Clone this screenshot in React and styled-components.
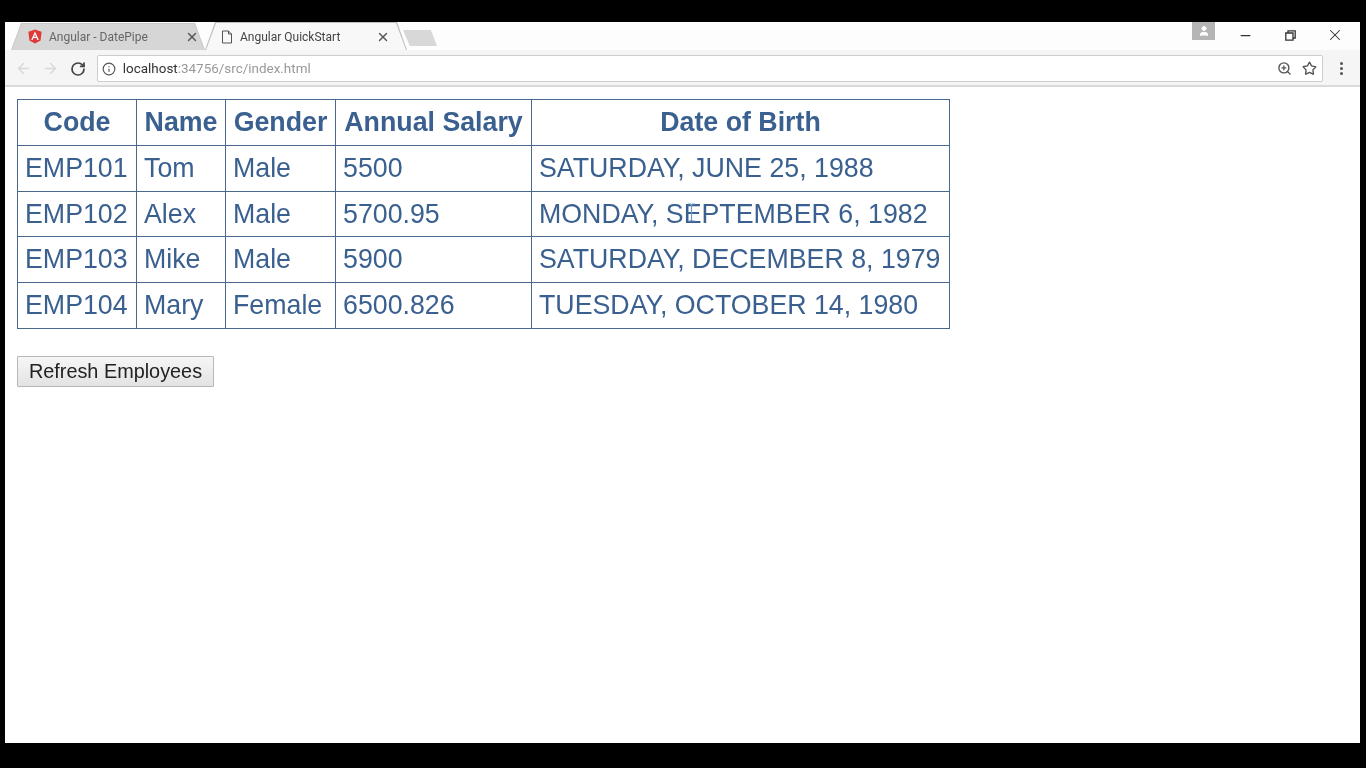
import React from "react";
import styled, { createGlobalStyle } from "styled-components";
import { ArrowLeft, ArrowRight, RotateCw, Info, ZoomIn, Star, X, Minus, User } from "lucide-react";

const Global = createGlobalStyle`
  html, body { margin: 0; padding: 0; background: #000; }
  body { font-family: "Liberation Sans", Arial, sans-serif; }
`;

const Screen = styled.div`
  width: 1366px;
  height: 768px;
  box-sizing: border-box;
  padding: 22px 6px 25px 5px;
  background: #000;
  overflow: hidden;
`;

const Win = styled.div`
  height: 100%;
  display: flex;
  flex-direction: column;
  background: #fff;
  filter: blur(0.45px);
`;

const TabStrip = styled.div`
  height: 28px;
  flex: none;
  display: flex;
  align-items: flex-end;
  background: #fdfdfd;
  padding-left: 6px;
`;

const Tab = styled.div`
  position: relative;
  width: ${p => p.$w}px;
  height: ${p => (p.$active ? 28 : 27)}px;
  padding-top: ${p => (p.$active ? 1 : 0)}px;
  display: flex;
  align-items: center;
  padding-left: ${p => p.$pl}px;
  box-sizing: border-box;
  font-family: Roboto, "Liberation Sans", sans-serif;
  font-size: 12px;
  color: ${p => (p.$active ? "#444" : "#666")};
  z-index: ${p => (p.$active ? 2 : 1)};
  &::before {
    content: "";
    position: absolute;
    inset: 0;
    z-index: -2;
    background: ${p => (p.$active ? "#bdbdbd" : "#c9c9c9")};
    clip-path: polygon(0 100%, 10px 0, calc(100% - 10px) 0, 100% 100%);
  }
  &::after {
    content: "";
    position: absolute;
    inset: 1px 1px 0 1px;
    z-index: -1;
    background: ${p => (p.$active ? "#f8f8f8" : "#d6d6d6")};
    clip-path: polygon(0 100%, 10px 0, calc(100% - 10px) 0, 100% 100%);
  }
`;

const TabTitle = styled.span`
  margin-left: 7px;
  flex: 1;
  white-space: nowrap;
`;

const TabClose = styled.span`
  display: flex;
  margin-right: ${p => p.$mr}px;
  color: #555;
`;

const NewTab = styled.div`
  width: 34px;
  height: 16px;
  margin: 0 0 4px -4px;
  background: #d8d8d8;
  clip-path: polygon(0 0, 82% 0, 100% 100%, 20% 100%);
`;

const Spacer = styled.div`
  flex: 1;
`;

const Avatar = styled.div`
  width: 23px;
  height: 18px;
  align-self: flex-start;
  background: #b5b5b5;
  display: flex;
  align-items: center;
  justify-content: center;
  color: #fff;
  margin-right: 7.5px;
`;

const WinControls = styled.div`
  display: flex;
  align-self: flex-start;
  padding-right: 2.5px;
`;

const WinButton = styled.div`
  width: 45px;
  height: 26px;
  display: flex;
  align-items: center;
  justify-content: center;
  color: #333;
`;

const Toolbar = styled.div`
  height: 37px;
  flex: none;
  display: flex;
  align-items: flex-start;
  box-sizing: border-box;
  background: #f5f5f5;
  border-bottom: 2px solid #dadada;
  padding: 5px 0 0 5.5px;
`;

const NavButton = styled.div`
  width: 27px;
  height: 27px;
  display: flex;
  justify-content: center;
  align-items: center;
  color: ${p => (p.$off ? "#d8d8d8" : "#444")};
`;

const Omnibox = styled.div`
  margin-left: 5.5px;
  width: 1229px;
  height: 27px;
  box-sizing: border-box;
  background: #fff;
  border: 1px solid #cdcdcd;
  border-radius: 2px;
  display: flex;
  align-items: center;
  padding: 0 5px 0 4px;
  font-family: Roboto, "Liberation Sans", sans-serif;
  font-size: 13.45px;
  color: #999;
`;

const OmniInfo = styled.span`
  display: flex;
  color: #555;
  margin-right: 7px;
`;

const Host = styled.span`
  color: #333;
`;

const OmniIcon = styled.span`
  display: flex;
  color: #555;
  margin-left: 10px;
`;

const MenuButton = styled.div`
  width: 37px;
  height: 27px;
  display: flex;
  flex-direction: column;
  align-items: center;
  justify-content: center;
  gap: 2px;
  & > i {
    width: 3px;
    height: 3px;
    border-radius: 50%;
    background: #555;
  }
`;

const Page = styled.div`
  flex: 1;
  position: relative;
  padding: 12px 12px;
  background: #fff;
`;

const Table = styled.table`
  border-collapse: collapse;
  color: #3a6090;
  font-size: 26.75px;
  table-layout: fixed;
  width: 932px;
`;

const Th = styled.th`
  box-sizing: border-box;
  border: 1px solid #4a678c;
  padding: 0;
  height: 46px;
  font-weight: 700;
  text-align: center;
  width: ${p => p.$w}px;
`;

const Td = styled.td`
  box-sizing: border-box;
  border: 1px solid #4a678c;
  padding: 0 0 0 7px;
  height: 45.7px;
  white-space: nowrap;
`;

const Refresh = styled.button`
  display: block;
  margin-top: 27.5px;
  width: 197px;
  height: 31px;
  box-sizing: border-box;
  padding: 0;
  font: 19.85px "Liberation Sans", Arial, sans-serif;
  color: #222;
  background: linear-gradient(#f6f6f6, #e3e3e3);
  border: 1px solid #b8b8b8;
  border-radius: 1px;
`;

const TextCursor = styled.svg`
  position: absolute;
  left: 682px;
  top: 116px;
`;

const columns = [
  ["Code", 119],
  ["Name", 89],
  ["Gender", 110],
  ["Annual Salary", 196],
  ["Date of Birth", 418],
];

const rows = [
  ["EMP101", "Tom", "Male", "5500", "SATURDAY, JUNE 25, 1988"],
  ["EMP102", "Alex", "Male", "5700.95", "MONDAY, SEPTEMBER 6, 1982"],
  ["EMP103", "Mike", "Male", "5900", "SATURDAY, DECEMBER 8, 1979"],
  ["EMP104", "Mary", "Female", "6500.826", "TUESDAY, OCTOBER 14, 1980"],
];

const AngularIcon = () => (
  <svg width="14" height="15" viewBox="0 0 14 15">
    <path d="M7 0.5 L13.6 2.8 L12.6 11.4 L7 14.5 L1.4 11.4 L0.4 2.8 Z" fill="#dd3b3b" />
    <path d="M7 2.6 L3.2 11 H4.7 L5.5 9 H8.5 L9.3 11 H10.8 Z M7 5.4 L8 7.8 H6 Z" fill="#fff" fillRule="evenodd" />
  </svg>
);

const PageIcon = () => (
  <svg width="12" height="14" viewBox="0 0 12 14" fill="none" stroke="#555" strokeWidth="1">
    <path d="M1.5 1 H7.5 L10.5 4 V13 H1.5 Z M7.5 1 V4 H10.5" />
  </svg>
);

const RestoreIcon = () => (
  <svg width="11" height="11" viewBox="0 0 11 11" fill="none" stroke="#333" strokeWidth="1.3">
    <path d="M0.8 3 H8 V10.2 H0.8 Z M3 3 V0.8 H10.2 V8 H8" />
  </svg>
);

export default function App() {
  return (
    <>
      <Global />
      <Screen>
        <Win>
          <TabStrip>
            <Tab $w={194} $pl={17}>
              <AngularIcon />
              <TabTitle>Angular - DatePipe</TabTitle>
              <TabClose $mr={6}><X size={14} strokeWidth={2.4} /></TabClose>
            </Tab>
            <Tab $active $w={202} $pl={16}>
              <PageIcon />
              <TabTitle>Angular QuickStart</TabTitle>
              <TabClose $mr={17}><X size={14} strokeWidth={2.4} /></TabClose>
            </Tab>
            <NewTab />
            <Spacer />
            <Avatar><User size={12} fill="#fff" strokeWidth={2} /></Avatar>
            <WinControls>
              <WinButton><Minus size={15} strokeWidth={2} /></WinButton>
              <WinButton><RestoreIcon /></WinButton>
              <WinButton><X size={18} strokeWidth={1.4} /></WinButton>
            </WinControls>
          </TabStrip>
          <Toolbar>
            <NavButton $off><ArrowLeft size={17} strokeWidth={2} /></NavButton>
            <NavButton $off><ArrowRight size={17} strokeWidth={2} /></NavButton>
            <NavButton><RotateCw size={16} strokeWidth={2.6} /></NavButton>
            <Omnibox>
              <OmniInfo><Info size={14} strokeWidth={2} /></OmniInfo>
              <Host>localhost</Host>:34756/src/index.html
              <Spacer />
              <OmniIcon><ZoomIn size={15} strokeWidth={2.2} /></OmniIcon>
              <OmniIcon><Star size={15} strokeWidth={2.2} /></OmniIcon>
            </Omnibox>
            <MenuButton><i /><i /><i /></MenuButton>
          </Toolbar>
          <Page>
            <Table>
              <thead>
                <tr>
                  {columns.map(([t, w]) => <Th key={t} $w={w}>{t}</Th>)}
                </tr>
              </thead>
              <tbody>
                {rows.map(r => (
                  <tr key={r[0]}>
                    {r.map((c, i) => <Td key={i}>{c}</Td>)}
                  </tr>
                ))}
              </tbody>
            </Table>
            <Refresh>Refresh Employees</Refresh>
            <TextCursor width="9" height="19" viewBox="0 0 9 19" fill="none" stroke="#6f9cc0" strokeWidth="1.2">
              <path d="M1 1 H3.5 L4.5 2 L5.5 1 H8 M4.5 2 V17 M1 18 H3.5 L4.5 17 L5.5 18 H8" />
            </TextCursor>
          </Page>
        </Win>
      </Screen>
    </>
  );
}
